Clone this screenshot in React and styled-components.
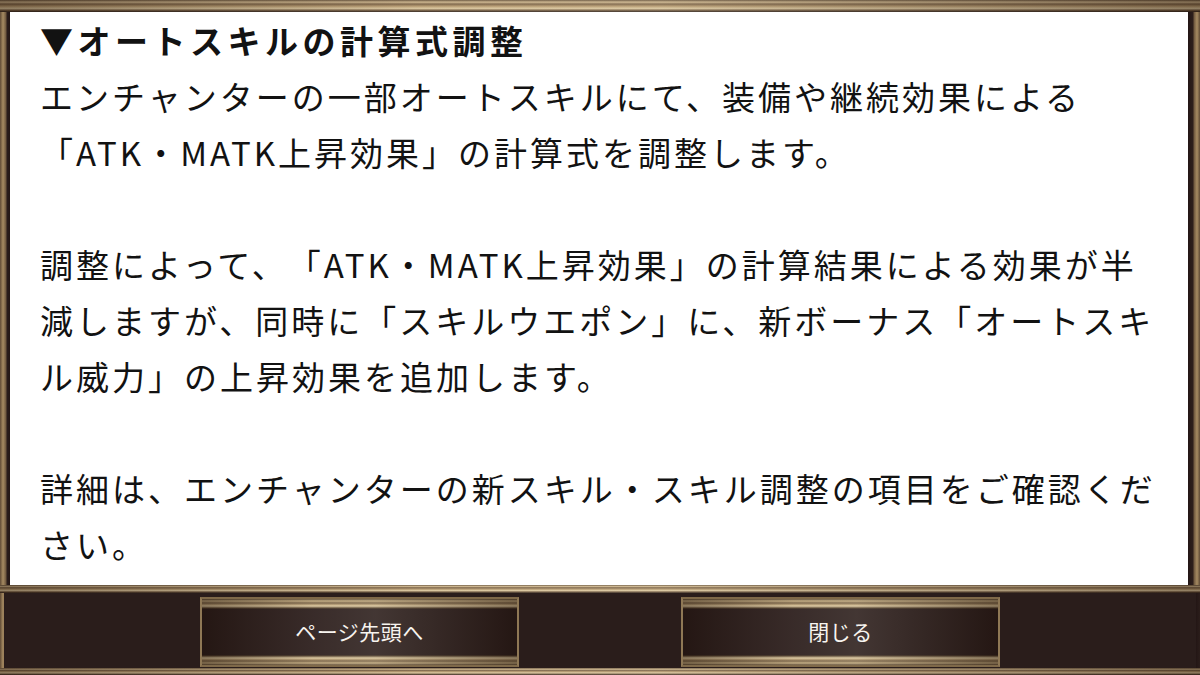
import React from "react";
import styled, { createGlobalStyle } from "styled-components";

const Global = createGlobalStyle`
  html, body { margin: 0; padding: 0; background: #2a1d1b; }
  body { font-family: "Noto Sans CJK JP", "Noto Sans", sans-serif; }
  #root { width: 1200px; height: 675px; overflow: hidden; }
`;

const sheen = `linear-gradient(to right, rgba(40,25,15,.4) 0%, rgba(255,240,210,.1) 35%, rgba(255,245,220,.15) 55%, rgba(40,25,15,.4) 100%)`;

const Page = styled.div`
  display: flex;
  flex-direction: column;
  width: 1200px;
  height: 675px;
  background: #2a1d1b;
`;

const HRail = styled.div`
  height: ${(p) => p.$h}px;
  flex: none;
  background:
    ${sheen},
    linear-gradient(to bottom,
      #5e4a34 0%, #c9b189 18%, #735b40 34%, #ae9268 52%, #d8c49c 70%, #6e573e 86%, #241814 100%);
`;

const Middle = styled.div`
  flex: none;
  height: 573px;
  display: flex;
`;

const VRail = styled.div`
  flex: none;
  width: ${(p) => p.$w}px;
  background: ${(p) =>
    p.$side === "left"
      ? `linear-gradient(to right, #5f4a35 0, #a68b62 3px, #6e573e 6px, #2a1d1b 7px, #241716 100%)`
      : `linear-gradient(to right, #231615 0, #2d1f1c 5px, #6e573e 6px, #a68b62 9px, #5f4a35 100%)`};
`;

const Panel = styled.div`
  flex: 1;
  background: #ffffff;
  padding: 0 30px;
  color: #121212;
  overflow: hidden;
  text-spacing-trim: space-all;
  font-feature-settings: normal;
`;

const Heading = styled.div`
  font-size: 33px;
  font-weight: 700;
  line-height: 56px;
  letter-spacing: 4.5px;
  white-space: nowrap;
`;

const Para = styled.p`
  margin: 0 0 56px;
  font-size: 33px;
  font-weight: 400;
  line-height: 56px;
  letter-spacing: 3px;
  white-space: nowrap;
  &:last-child { margin-bottom: 0; }
`;

const Footer = styled.div`
  flex: none;
  height: 75px;
  display: flex;
`;

const FooterBody = styled.div`
  flex: 1;
  display: grid;
  grid-template-columns: 319px 319px;
  justify-content: center;
  column-gap: 162px;
  padding-top: 4px;
  align-items: start;
`;

const stripe = (dir) =>
  `linear-gradient(to ${dir}, #55432f 0, #bda67c 2px, #705a3f 4px, #bda47a 6px, #dcc9a1 7px, #54412d 9px, #201413 10px)`;

const Button = styled.button`
  height: 70px;
  box-sizing: border-box;
  border: 2px solid #7f6949;
  border-left-color: #8f7855;
  border-right-color: #8f7855;
  padding: 0 0 2px;
  cursor: pointer;
  background:
    ${sheen},
    ${stripe("bottom")} top / 100% 10px no-repeat,
    ${stripe("top")} bottom / 100% 10px no-repeat,
    #221516;
  color: #f7f4ef;
  font-family: "Noto Sans CJK JP", "Noto Sans", sans-serif;
  font-size: 21px;
  letter-spacing: 0.5px;
  line-height: 1;
  display: flex;
  align-items: center;
  justify-content: center;
`;

export default function App() {
  return (
    <>
      <Global />
      <Page>
        <HRail $h={12} />
        <Middle>
          <VRail $side="left" $w={10} />
          <Panel>
            <Heading>▼オートスキルの計算式調整</Heading>
            <Para>
              エンチャンターの一部オートスキルにて、装備や継続効果による
              <br />
              「ATK・MATK上昇効果」の計算式を調整します。
            </Para>
            <Para>
              調整によって、「ATK・MATK上昇効果」の計算結果による効果が半
              <br />
              減しますが、同時に「スキルウエポン」に、新ボーナス「オートスキ
              <br />
              ル威力」の上昇効果を追加します。
            </Para>
            <Para>
              詳細は、エンチャンターの新スキル・スキル調整の項目をご確認くだ
              <br />
              さい。
            </Para>
          </Panel>
          <VRail $side="right" $w={12} />
        </Middle>
        <HRail $h={8} />
        <Footer>
          <VRail $side="left" $w={4} />
          <FooterBody>
            <Button type="button">ページ先頭へ</Button>
            <Button type="button">閉じる</Button>
          </FooterBody>
          <VRail $side="right" $w={4} />
        </Footer>
        <HRail $h={7} />
      </Page>
    </>
  );
}
